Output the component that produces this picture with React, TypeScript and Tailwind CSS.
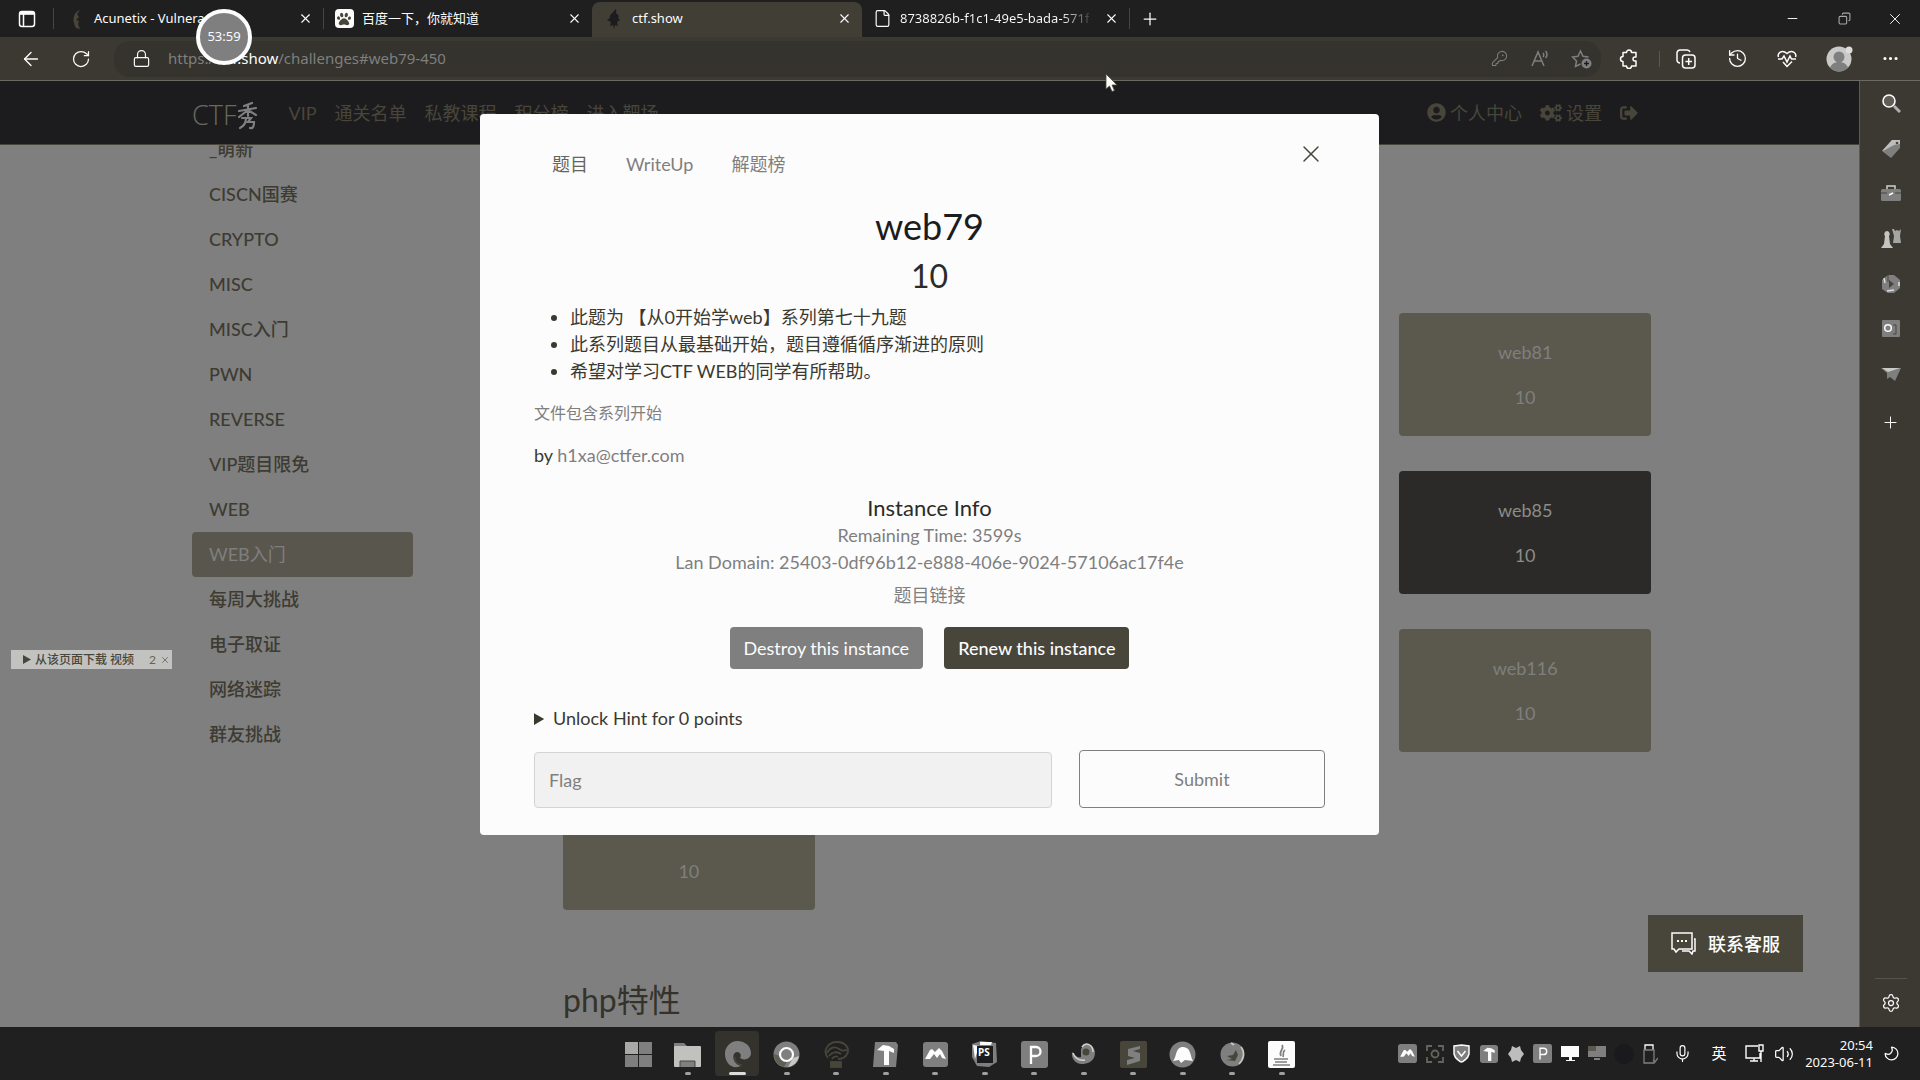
import React from "react";
import type { ReactNode } from "react";
import {
  ArrowLeft,
  RotateCw,
  Lock,
  X,
  Plus,
  Minus,
  Copy,
  KeyRound,
  History,
  Ellipsis,
  File,
  Settings,
  Mic,
  Volume2,
  Moon,
} from "lucide-react";
import { FaUserCircle, FaCogs, FaSignOutAlt, FaPaw } from "react-icons/fa";

const LIGHT = "#fcfcfc";
const MID = "#7f7f7f";
const OLIVE = "#48463a";
const DARK = "#1c1c1e";

/* ---------- Browser tabs ---------- */

function Tab({ icon, title, active, faded, size }: { icon: ReactNode; title: string; active?: boolean; faded?: boolean; size: string }) {
  return (
    <div
      className={
        (active ? "bg-[#403e35] rounded-t-lg mt-0.5 pb-0.5 " : "") + "flex items-center pr-2 min-w-0 shrink " + size
      }
    >
      <button type="button" className="flex min-w-0 flex-1 items-center gap-2 text-left">
        <span className="flex size-5 shrink-0 items-center justify-center">{icon}</span>
        <span
          className={
            (faded ? "bg-gradient-to-r from-[#fcfcfc] from-85% to-[#48463a] bg-clip-text text-transparent " : "text-[#fcfcfc] ") +
            "whitespace-nowrap"
          }
        >
          {title}
        </span>
      </button>
      <button type="button" aria-label={"Close " + title} className="flex w-5 shrink-0 items-center justify-center text-[#fcfcfc]">
        <X size={15} strokeWidth={1.75} />
      </button>
    </div>
  );
}

function Flame({ color }: { color: string }) {
  return (
    <svg width="14" height="20" viewBox="0 0 14 20" fill={color}>
      <path d="M9 0c1 2-1 3 1 5 2 1 2 3 1 4l2 2-3 2 1 4-3-1-1 4-1-4-3 1 1-4-4-2 3-2c-1-3 2-4 3-6C7 3 7 1 9 0z" />
    </svg>
  );
}

function TabBar() {
  return (
    <header className="flex h-[37px] shrink-0 bg-[#1f1f20]">
      <button type="button" aria-label="Tab actions" className="flex w-[53px] items-center justify-center">
        <svg width="18" height="18" viewBox="0 0 18 18" fill="none" stroke={LIGHT} strokeWidth="1.5">
          <rect x="1.5" y="1.5" width="15" height="15" rx="2.5" />
          <path d="M2 4h14M5.5 4v12" />
          <path d="M2 3h14" strokeWidth="2.5" />
        </svg>
      </button>
      <span className="my-2 w-px bg-[#48463a]" />
      <Tab
        size="w-[269px] pl-3 text-[13px]"
        icon={
          <svg width="10" height="20" viewBox="0 0 10 20" fill={OLIVE}>
            <path d="M9 1c-6 2-9 9-4 18l4 1-2-5 1-3-3-1 3-3-2-3z" />
          </svg>
        }
        title="Acunetix - Vulnera"
      />
      <span className="my-2 w-px bg-[#48463a]" />
      <Tab
        size="w-[268px] pl-2.5 text-[13px]"
        icon={
          <span className="flex size-[19px] items-center justify-center rounded-sm bg-[#fcfcfc] text-[#48463a]">
            <FaPaw size={14} />
          </span>
        }
        title="百度一下，你就知道"
      />
      <Tab size="w-[270px] pl-3 text-[13px]" active icon={<Flame color={DARK} />} title="ctf.show" />
      <Tab size="w-[267px] pl-2.5 text-[13px]" faded icon={<File size={19} strokeWidth={1.5} color={LIGHT} />} title="8738826b-f1c1-49e5-bada-571f" />
      <span className="my-2 w-px bg-[#48463a]" />
      <button type="button" aria-label="New tab" className="flex w-10 items-center justify-center text-[#fcfcfc]">
        <Plus size={20} strokeWidth={1.5} />
      </button>
      <div className="ml-auto flex text-[#fcfcfc]">
        <button type="button" aria-label="Minimize" className="flex w-[52px] items-center justify-center">
          <Minus size={15} strokeWidth={1.5} />
        </button>
        <button type="button" aria-label="Restore" className="flex w-[52px] items-center justify-center text-[#a8a8a4]">
          <Copy size={13} strokeWidth={2} className="-scale-x-100" />
        </button>
        <button type="button" aria-label="Close window" className="flex w-[50px] items-center justify-center">
          <X size={18} strokeWidth={1.25} />
        </button>
      </div>
    </header>
  );
}

/* ---------- Address bar ---------- */

function ToolButton({ label, width, children }: { label: string; width: string; children: ReactNode }) {
  return (
    <button type="button" aria-label={label} className={"flex h-full shrink-0 items-center justify-center text-[#fcfcfc] " + width}>
      {children}
    </button>
  );
}

function Toolbar() {
  return (
    <div className="flex h-11 shrink-0 items-center border-b border-[#6c6b63] bg-[#3b3932] pl-1.5">
      <ToolButton label="Back" width="w-[50px]">
        <ArrowLeft size={22} strokeWidth={1.5} />
      </ToolButton>
      <ToolButton label="Refresh" width="w-[50px]">
        <RotateCw size={20} strokeWidth={1.5} />
      </ToolButton>
      <div className="ml-2 flex h-9 min-w-0 flex-1 items-center rounded-2xl bg-[#34332d] pl-[18px]">
        <span className="flex w-[36px] text-[#fcfcfc]">
          <Lock size={19} strokeWidth={1.5} />
        </span>
        <span className="min-w-0 flex-1 truncate text-[15px] text-[#7f7f7f]">
          https://<span className="text-[#fcfcfc]">ctf.show</span>/challenges#web79-450
        </span>
        <button type="button" aria-label="Passwords" className="flex w-10 justify-center text-[#7f7f7f]">
          <KeyRound size={17} strokeWidth={1.5} />
        </button>
        <button type="button" aria-label="Read aloud" className="flex w-[42px] justify-center">
          <svg width="19" height="18" viewBox="0 0 19 18" fill="none" stroke={MID} strokeWidth="1.5">
            <path d="M1 16L7 2l6 14M3 11h8M12 3c1 1 1 3 0 4M14.500 1c2 2 2 5 0 7" />
          </svg>
        </button>
        <button type="button" aria-label="Add to favorites" className="flex w-10 justify-center">
          <svg width="21" height="20" viewBox="0 0 21 20" fill="none" stroke={MID} strokeWidth="1.5">
            <path d="M9.500 15L4.500 17.500l1-5.500L1.500 8l5.500-.8L9.500 2l2.500 5.200 5.500.8" />
            <circle cx="15.500" cy="14.500" r="5" fill={MID} stroke="none" />
            <path d="M15.500 12v5M13 14.500h5" stroke={DARK} strokeWidth="1.300" />
          </svg>
        </button>
      </div>
      <ToolButton label="Extensions" width="w-[58px] pr-0.5">
        <svg width="20" height="20" viewBox="0 0 20 20" fill="none" stroke={LIGHT} strokeWidth="1.500" strokeLinejoin="round">
          <path d="M4 3.500h3.500a2.500 2.500 0 0 1 5 0H17V8h-1a2 2 0 0 0 0 4h1v5h-4.500a2.500 2.500 0 0 1-5 0H4v-4.500a2.500 2.500 0 0 1 0-5z" />
        </svg>
      </ToolButton>
      <span className="h-4 w-px bg-[#5a5950]" />
      <ToolButton label="Collections" width="w-[52px]">
        <svg width="20" height="20" viewBox="0 0 20 20" fill="none" stroke={LIGHT} strokeWidth="1.5">
          <path d="M4 14a3 3 0 0 1-3-3V4a3 3 0 0 1 3-3h7a3 3 0 0 1 3 2" />
          <rect x="6.500" y="6" width="12.500" height="13" rx="3" />
          <path d="M12.700 9v7M9.500 12.500h6.500" />
        </svg>
      </ToolButton>
      <ToolButton label="History" width="w-[50px]">
        <History size={21} strokeWidth={1.5} />
      </ToolButton>
      <ToolButton label="Browser essentials" width="w-[50px]">
        <svg width="20" height="18" viewBox="0 0 20 18" fill="none" stroke={LIGHT} strokeWidth="1.5">
          <path d="M1.500 7C0 3 5 -1 10 3.500 15-1 20 3 18.500 7M6 12l4 4.500 5-5M1 9h4l2-3 3 6 3-6 1.500 3H19" />
        </svg>
      </ToolButton>
      <ToolButton label="Profile" width="w-[54px]">
        <svg width="27" height="26" viewBox="0 0 27 26">
          <circle cx="13" cy="13" r="12.500" fill="#c9c9c7" />
          <circle cx="23" cy="4" r="3.500" fill="#dcdcda" />
          <circle cx="13" cy="11" r="5.500" fill={MID} />
          <path d="M4 22c2-8 16-8 18 0-5 4.500-13 4.500-18 0z" fill={MID} />
        </svg>
      </ToolButton>
      <ToolButton label="More" width="w-[54px] pr-1.5">
        <Ellipsis size={19} strokeWidth={2} />
      </ToolButton>
    </div>
  );
}

/* ---------- Site ---------- */

const navLinks = ["VIP", "通关名单", "私教课程", "积分榜", "进入靶场"];

function SiteNav() {
  return (
    <nav className="h-16 shrink-0 border-b border-[#48463a] bg-[#1c1c1e] text-[#48463a]">
      <div className="mx-auto flex h-full max-w-[1475px] items-center text-lg">
        <a href="#home" aria-label="CTF秀" className="mr-7 flex items-end pt-1">
          <span className="font-['Open_Sans',sans-serif] text-[27px] font-light leading-8 text-[#6a695f]">CTF</span>
          <svg width="24" height="30" viewBox="0 0 22 30" fill="none" stroke={MID} strokeWidth="2.200" strokeLinecap="round">
            <path d="M15 2L7 5M2 10l17-3M11 4v11M11 9l-9 7M11 9l8 5M5 17h9l-3 4h6c0 4-1 7-4 6M9 17c0 5-2 8-6 10" />
          </svg>
        </a>
        <div className="flex gap-[18px]">
          {navLinks.map((n) => (
            <a key={n} href="#nav" className="whitespace-nowrap">
              {n}
            </a>
          ))}
        </div>
        <div className="ml-auto mr-[29px] flex items-center gap-[18px]">
          <a href="#user" className="flex items-center gap-1">
            <FaUserCircle size={19} />
            个人中心
          </a>
          <a href="#settings" className="flex items-center gap-1">
            <FaCogs size={22} />
            设置
          </a>
          <a href="#logout" aria-label="Logout">
            <FaSignOutAlt size={18} />
          </a>
        </div>
      </div>
    </nav>
  );
}

const categories = [
  "_萌新",
  "CISCN国赛",
  "CRYPTO",
  "MISC",
  "MISC入门",
  "PWN",
  "REVERSE",
  "VIP题目限免",
  "WEB",
  "WEB入门",
  "每周大挑战",
  "电子取证",
  "网络迷踪",
  "群友挑战",
];

function Categories() {
  return (
    <ul className="-mt-[18px] w-[221px] shrink-0">
      {categories.map((c) => (
        <li key={c}>
          <a
            href="#category"
            className={
              (c === "WEB入门" ? "bg-[#59574d] font-normal text-[#7f7f7f] " : "font-medium text-[#3d3b32] ") +
              "block rounded px-[17px] py-2 text-lg leading-[29px]"
            }
          >
            {c}
          </a>
        </li>
      ))}
    </ul>
  );
}

const cards = [
  { name: "web81", place: "col-start-4", tone: "bg-[#5b594d] text-[#7f7f7f]" },
  { name: "web85", place: "col-start-4", tone: "bg-[#2b2a28] text-[#8c8c88]" },
  { name: "web116", place: "col-start-4", tone: "bg-[#5b594d] text-[#7f7f7f]" },
  { name: "web117", place: "col-start-1", tone: "bg-[#5b594d] text-[#7f7f7f]" },
];

function Challenges() {
  return (
    <main className="min-w-0 flex-1 pr-4 pt-[168px]">
      <div className="grid grid-cols-4 gap-x-[27px] gap-y-[35px]">
        {cards.map((c) => (
          <button
            type="button"
            key={c.name}
            className={"flex h-[123px] flex-col items-center justify-center gap-[17px] rounded text-lg leading-7 " + c.place + " " + c.tone}
          >
            <span>{c.name}</span>
            <span>10</span>
          </button>
        ))}
      </div>
      <h3 className="mt-[66px] text-[32px] leading-[48px] text-[#34332b]">php特性</h3>
    </main>
  );
}

/* ---------- Challenge dialog ---------- */

function Dialog() {
  return (
    <div className="absolute inset-x-0 top-[33px] flex justify-center">
      <section
        role="dialog"
        aria-label="web79"
        className="w-full max-w-[899px] rounded bg-[#fcfcfc] px-[54px] pb-[27px] pt-[26px] text-lg leading-[27px] text-[#3a392f]"
      >
        <div className="flex items-start justify-between">
          <div role="tablist" className="flex gap-[38px] pl-[18px] pt-[11px] text-[#7f7f7f]">
            <button type="button" role="tab" className="text-[#66655c]">
              题目
            </button>
            <button type="button" role="tab">
              WriteUp
            </button>
            <button type="button" role="tab">
              解题榜
            </button>
          </div>
          <button type="button" aria-label="Close" className="text-[#48463a]">
            <X size={28} strokeWidth={1.25} />
          </button>
        </div>
        <h2 className="mt-6 text-center text-4xl leading-[48px] text-[#1c1c1e]">web79</h2>
        <h3 className="mt-0.5 text-center text-[32px] leading-[48px] text-[#2c2b26]">10</h3>
        <ul className="mt-1 list-disc pl-9">
          <li>此题为 【从0开始学web】系列第七十九题</li>
          <li>此系列题目从最基础开始，题目遵循循序渐进的原则</li>
          <li>希望对学习CTF WEB的同学有所帮助。</li>
        </ul>
        <p className="mt-4 text-base leading-[24px] text-[#7f7f7f]">文件包含系列开始</p>
        <p className="mt-[17px]">
          by{" "}
          <a href="mailto:h1xa@ctfer.com" className="text-[#7f7f7f]">
            h1xa@ctfer.com
          </a>
        </p>
        <div className="mt-[25px] text-center text-[#7f7f7f]">
          <h5 className="text-[22px] leading-7 text-[#2c2b26]">Instance Info</h5>
          <p>Remaining Time: 3599s</p>
          <p>Lan Domain: 25403-0df96b12-e888-406e-9024-57106ac17f4e</p>
          <a href="#instance" className="mt-[6px] block">
            题目链接
          </a>
          <div className="mt-[18px] flex justify-center gap-[21px] text-[#fcfcfc]">
            <button type="button" className="h-[42px] rounded bg-[#7f7f7f] px-3.5">
              Destroy this instance
            </button>
            <button type="button" className="h-[42px] rounded bg-[#48463a] px-3.5 font-medium">
              Renew this instance
            </button>
          </div>
        </div>
        <details className="mt-9">
          <summary className="cursor-pointer">Unlock Hint for 0 points</summary>
        </details>
        <div className="mt-[18px] flex items-end gap-[27px]">
          <input
            type="text"
            aria-label="Flag"
            placeholder="Flag"
            className="h-14 min-w-0 flex-1 rounded border border-[#d4d4d4] bg-[#f1f1f1] px-3.5 placeholder:text-[#7f7f7f]"
          />
          <button type="button" className="h-[58px] w-[246px] rounded border border-[#7f7f7f] text-[#7f7f7f]">
            Submit
          </button>
        </div>
      </section>
    </div>
  );
}

/* ---------- Floating widgets ---------- */

function DownloadBar() {
  return (
    <div className="absolute left-[11px] top-[569px] flex h-[19px] w-[161px] items-center gap-1 bg-[#c2c2c1] pl-3 pr-0.5 text-xs text-[#48463a]">
      <svg width="8" height="9" viewBox="0 0 8 9" fill={OLIVE}>
        <path d="M0 0l8 4.500L0 9z" />
      </svg>
      <button type="button" className="whitespace-nowrap font-medium">
        从该页面下载 视频
      </button>
      <span className="ml-auto text-[#66655c]">2</span>
      <button type="button" aria-label="Close download bar" className="text-[#66655c]">
        <X size={10} />
      </button>
    </div>
  );
}

function ContactButton() {
  return (
    <button
      type="button"
      className="absolute bottom-[55px] right-14 flex h-[57px] w-[155px] items-center justify-center gap-3 bg-[#48463a] text-lg font-medium text-[#fcfcfc]"
    >
      <svg width="25" height="23" viewBox="0 0 25 23" fill="none" stroke={LIGHT} strokeWidth="1.500">
        <path d="M1 1h20v16H8l-3 3-2-3H1zM23 7h1v12h-2l-1 3-3-3h-7" />
        <path d="M6 9h2M10 9h2M14 9h2" strokeWidth="2" />
      </svg>
      联系客服
    </button>
  );
}

/* ---------- Browser side bar ---------- */

const sideIcons: { name: string; art: ReactNode }[] = [
  {
    name: "Search",
    art: (
      <g>
        <path d="M13 12l6 6" stroke="#b0b0ae" strokeWidth="3" />
        <circle cx="8" cy="7" r="6" fill="#5f5e56" stroke={LIGHT} strokeWidth="1.600" />
      </g>
    ),
  },
  {
    name: "Shopping",
    art: (
      <g>
        <path d="M11 1h8v8l-9 10-9-7z" fill={MID} />
        <path d="M11 1h8v4l-6 1-9 5-3 1z" fill="#bdbdbb" />
        <circle cx="16" cy="4" r="1.300" fill={OLIVE} />
      </g>
    ),
  },
  {
    name: "Tools",
    art: (
      <g>
        <path d="M6 5V2h8v3" fill="none" stroke="#cfcfcd" strokeWidth="1.500" />
        <rect x="0" y="5" width="20" height="12" rx="1.500" fill={MID} />
        <path d="M0 9h6M14 9h6" stroke={OLIVE} />
        <path d="M8 11l4-2" stroke={LIGHT} strokeWidth="1.500" />
      </g>
    ),
  },
  {
    name: "Games",
    art: (
      <g>
        <path d="M11 0h2l1 2 2-1 2 1 2-2-1 7 1 7h-8l1-7z" fill="#a5a5a3" />
        <path d="M6 2a3 3 0 0 1 2 5l1 8 3 4H0l3-4 1-8a3 3 0 0 1 2-5z" fill="#c4c4c2" />
      </g>
    ),
  },
  {
    name: "Microsoft 365",
    art: (
      <g>
        <path d="M7 1h6l6 5v8l-6 5H7l-6-4V6z" fill={MID} />
        <path d="M8 6l5 4-5 4z" fill={OLIVE} />
        <path d="M7 1v7" stroke={OLIVE} />
        <path d="M3 4l1 5M6 17l7-1M18 8v4" stroke="#dededc" strokeWidth="1.500" />
      </g>
    ),
  },
  {
    name: "Outlook",
    art: (
      <g>
        <rect x="1" y="1" width="18" height="17" rx="1" fill={MID} />
        <circle cx="7" cy="9" r="3.300" fill="none" stroke={LIGHT} strokeWidth="1.500" />
        <path d="M12 6h3v9h-3" fill="none" stroke={OLIVE} />
      </g>
    ),
  },
  {
    name: "Drop",
    art: (
      <g>
        <path d="M0 4h20l-6 13-5-4-3 2V9z" fill={MID} />
        <path d="M1 4h18L7 8z" fill="#c9c9c7" />
      </g>
    ),
  },
];

function SideBar() {
  return (
    <aside className="flex w-[61px] shrink-0 flex-col items-center border-l border-[#5c5b52] bg-[#3b3932] pl-px text-[#fcfcfc]">
      {sideIcons.map((s) => (
        <button type="button" key={s.name} aria-label={s.name} className="flex h-[45px] w-full items-center justify-center">
          <svg width="20" height="20" viewBox="0 0 20 20">
            {s.art}
          </svg>
        </button>
      ))}
      <button type="button" aria-label="Customize sidebar" className="mt-1 flex h-[45px] w-full items-center justify-center">
        <Plus size={19} strokeWidth={1.25} />
      </button>
      <span className="mt-auto h-px w-8 bg-[#55534a]" />
      <button type="button" aria-label="Sidebar settings" className="flex h-12 w-full items-center justify-center">
        <Settings size={20} strokeWidth={1.5} />
      </button>
    </aside>
  );
}

/* ---------- Taskbar ---------- */

const MountainMark = () => <path d="M3 18l5-9 2-1 3 3 4-4 3 3 4 8-4-1-2-4-3 4-3-4-4 5z" fill={LIGHT} />;
const HammerMark = () => <path d="M5 9l6-5 6 1 5 3v4l-5-2v14h-5V10z" fill={LIGHT} />;

const apps: { name: string; art: ReactNode }[] = [
  {
    name: "Start",
    art: (
      <g fill={MID}>
        <rect x="0" y="1" width="13" height="12" fill="#a9a9a7" />
        <rect x="14" y="1" width="13" height="12" />
        <rect x="0" y="14" width="13" height="12" />
        <rect x="14" y="14" width="13" height="12" />
      </g>
    ),
  },
  {
    name: "Explorer",
    art: (
      <g>
        <path d="M0 2h10l3 3v5H0z" fill={MID} />
        <rect x="0" y="5" width="27" height="21" rx="1" fill="#c1c1c0" />
        <path d="M6 26v-6h15v6" fill={MID} stroke={OLIVE} />
      </g>
    ),
  },
  {
    name: "Edge",
    art: (
      <g>
        <path d="M1 13A13 12.500 0 0 1 27 12c0 6-7 8-11 5 2-3 0-6-3-6-5 0-6 11 4 14C8 29 1 22 1 13z" fill={MID} />
        <path d="M11 16c-1 4 2 8 7 8" stroke={OLIVE} fill="none" strokeWidth="1.500" />
      </g>
    ),
  },
  {
    name: "Chrome",
    art: (
      <g>
        <circle cx="13.500" cy="13.500" r="13" fill={MID} />
        <path d="M1 13a13 13 0 0 0 10 13l4-7-8-4z" fill="#5f5e54" />
        <path d="M26 15a13 13 0 0 1-11 11l5-9z" fill="#c8c8c6" />
        <circle cx="13.500" cy="13.500" r="6.500" fill={MID} stroke={LIGHT} strokeWidth="2.200" />
      </g>
    ),
  },
  {
    name: "Navicat",
    art: (
      <g fill="none" stroke={OLIVE} strokeWidth="1.800">
        <path d="M5 17C-1 10 5 1 14 1s13 7 10 12c-2 4-6 5-9 5M4 12c3-6 8-7 12-4s5 1 8 1M6 15c3-4 8-5 12-2M9 18c2-3 4-3 6-2" />
        <rect x="8" y="21" width="10" height="5" fill={OLIVE} />
      </g>
    ),
  },
  {
    name: "Hammer",
    art: (
      <g>
        <path d="M3 1h21l2 3-2 22H1z" fill={MID} />
        <HammerMark />
      </g>
    ),
  },
  {
    name: "Mountain",
    art: (
      <g>
        <rect x="1" y="1" width="25" height="25" rx="3" fill={MID} />
        <MountainMark />
      </g>
    ),
  },
  {
    name: "PhpStorm",
    art: (
      <g>
        <path d="M1 3l9-3 15 2 1 19-8 5-12-1-5-9z" fill={MID} />
        <path d="M2 4l2 14 4-13zM9 1h12l-1 3H9z" fill={LIGHT} />
        <rect x="6" y="5" width="16" height="17" fill={DARK} />
        <text x="7" y="15" fontSize="10" fontWeight="700" fill={LIGHT}>PS</text>
      </g>
    ),
  },
  {
    name: "P",
    art: (
      <g>
        <rect x="0" y="0" width="27" height="27" rx="3" fill={MID} />
        <path d="M10 23V6h5c6 0 6 9 0 9h-5" fill="none" stroke={LIGHT} strokeWidth="2.300" />
      </g>
    ),
  },
  {
    name: "Cloud",
    art: (
      <g>
        <path d="M11 9c2-9 14-6 14 3 0 9-9 11-13 11C5 23 1 17 2 11c3 4 6 6 9 5z" fill={MID} />
        <circle cx="16" cy="11" r="3.500" fill={OLIVE} />
        <path d="M12 6c4-6 11-2 11 5M3 12c2 5 6 8 12 7" stroke="#d2d2d0" fill="none" strokeWidth="1.500" />
      </g>
    ),
  },
  {
    name: "Sublime",
    art: (
      <g>
        <rect x="0" y="0" width="27" height="27" rx="2" fill={OLIVE} />
        <path d="M20 5L8 8v7l7 2-8 2v5l13-4v-8l-7-2 7-2z" fill={MID} />
      </g>
    ),
  },
  {
    name: "Bell",
    art: (
      <g>
        <circle cx="13.500" cy="13.500" r="13" fill={MID} />
        <path d="M4 20c4-4 2-14 10-14s7 9 10 14l-8-1-4 3-2-3z" fill={LIGHT} />
      </g>
    ),
  },
  {
    name: "Firefox",
    art: (
      <g>
        <circle cx="13.500" cy="13.500" r="12" fill={MID} />
        <path d="M17 9l2 5-3 6-9-1 6-1-5-3 6-1z" fill={OLIVE} />
        <path d="M22 6c4 5 3 12-2 17M12 2l3 2" stroke="#c9c9c7" fill="none" strokeWidth="1.600" />
      </g>
    ),
  },
  {
    name: "Java",
    art: (
      <g>
        <rect x="0" y="0" width="27" height="27" rx="2" fill={LIGHT} />
        <path d="M14 4c3 4-4 6-1 11M17 9c-3 2-1 4-2 7M6 18h14M7 21h12M5 24h17" stroke={MID} fill="none" strokeWidth="1.700" />
      </g>
    ),
  },
];

function TrayIcon({ label, children }: { label: string; children: ReactNode }) {
  return (
    <button type="button" aria-label={label} className="flex w-[27px] items-center justify-center">
      {children}
    </button>
  );
}

function Tray() {
  return (
    <div className="absolute inset-y-0 right-0 flex items-center pr-[19px] text-[#fcfcfc]">
      <TrayIcon label="Mountain">
        <svg width="19" height="19" viewBox="0 0 27 27">
          <rect width="27" height="27" rx="4" fill={MID} />
          <MountainMark />
        </svg>
      </TrayIcon>
      <TrayIcon label="Scan">
        <svg width="18" height="18" viewBox="0 0 18 18" fill="none" stroke="#66655c" strokeWidth="1.800">
          <path d="M1 6V1h5M12 1h5v5M17 12v5h-5M6 17H1v-5" />
          <circle cx="9" cy="9" r="3.500" />
        </svg>
      </TrayIcon>
      <TrayIcon label="Security">
        <svg width="17" height="19" viewBox="0 0 17 19" fill={MID} stroke={LIGHT} strokeWidth="1.500">
          <path d="M1 2l7.500-1L16 2v8c-1 5-7 8-7.500 8S2 15 1 10z" />
          <path d="M4.500 7l4 5 4-5" fill="none" />
        </svg>
      </TrayIcon>
      <TrayIcon label="Hammer">
        <svg width="18" height="18" viewBox="0 0 27 27">
          <rect width="27" height="27" rx="4" fill={MID} />
          <HammerMark />
        </svg>
      </TrayIcon>
      <TrayIcon label="Flower">
        <svg width="18" height="18" viewBox="0 0 18 18" fill="#bdbdbb">
          <path d="M5 1l4 2 4-2 1 4 3 4-3 4-1 4-4-2-4 2-1-4-3-4 3-4z" />
        </svg>
      </TrayIcon>
      <TrayIcon label="P">
        <svg width="19" height="19" viewBox="0 0 27 27">
          <rect width="27" height="27" rx="3" fill={MID} />
          <path d="M10 22V6h5c6 0 6 9 0 9h-5" fill="none" stroke={LIGHT} strokeWidth="2" />
        </svg>
      </TrayIcon>
      <TrayIcon label="Screen">
        <svg width="18" height="17" viewBox="0 0 18 17" fill={LIGHT}>
          <path d="M0 1h18v11H0zM8 12h3v3h3v1H5v-1h3z" />
        </svg>
      </TrayIcon>
      <TrayIcon label="Display">
        <svg width="18" height="17" viewBox="0 0 18 17" fill={MID}>
          <path d="M0 1h18v11H0zM6 13h6v2H6z" />
          <path d="M0 1h8v5H0z" fill="#5b594d" />
        </svg>
      </TrayIcon>
      <TrayIcon label="Hidden app">
        <span className="size-5 shrink-0 rounded-full bg-[#1a1a1c]" />
      </TrayIcon>
      <TrayIcon label="USB">
        <svg width="15" height="20" viewBox="0 0 15 20" fill="none" stroke={MID} strokeWidth="1.300">
          <path d="M2 6V1h8v5" stroke={LIGHT} />
          <path d="M1 6h10v13H1zM10 16l2 2 3-4" />
        </svg>
      </TrayIcon>
      <button type="button" aria-label="Microphone" className="flex w-9 items-center justify-center">
        <Mic size={19} strokeWidth={1.5} />
      </button>
      <button type="button" className="flex w-[38px] items-center justify-center text-[15px]">
        英
      </button>
      <button type="button" aria-label="Network" className="flex w-8 items-center justify-center">
        <svg width="19" height="19" viewBox="0 0 19 19" fill="none" stroke={LIGHT} strokeWidth="1.400">
          <path d="M13 2H1v12h14V9M5 17h8M9 14v3M14 1h4v6h-4zM16 7v11" />
        </svg>
      </button>
      <TrayIcon label="Volume">
        <Volume2 size={20} strokeWidth={1.5} />
      </TrayIcon>
      <div className="w-[76px] text-right text-[13px] leading-[17px]">
        <div>20:54</div>
        <div className="whitespace-nowrap">2023-06-11</div>
      </div>
      <button type="button" aria-label="Notifications" className="ml-2 flex w-5 items-center justify-center">
        <Moon size={17} strokeWidth={1.75} className="-scale-x-100" />
      </button>
    </div>
  );
}

function Taskbar() {
  return (
    <footer className="relative flex h-[53px] shrink-0 justify-center bg-[#202020]">
      <div className="flex w-[688px] justify-between py-1">
        {apps.map((a) => (
          <button
            type="button"
            key={a.name}
            aria-label={a.name}
            className={(a.name === "Edge" ? "bg-[#33322c] " : "") + "flex w-11 flex-col items-center rounded"}
          >
            <svg width="27" height="27" viewBox="0 0 27 27" className="mt-2.5">
              {a.art}
            </svg>
            <span
              className={
                (a.name === "Edge" ? "w-[17px] bg-[#dcdcdc]" : a.name === "Start" ? "w-0" : "w-1.5 bg-[#a0a09d]") + " mt-1 h-[3px] rounded-full"
              }
            />
          </button>
        ))}
      </div>
      <Tray />
    </footer>
  );
}

/* ---------- Screen ---------- */

export default function App() {
  return (
    <div className="relative flex h-screen flex-col overflow-hidden bg-[#7f7f7f] font-['Noto_Sans','Noto_Sans_CJK_SC',sans-serif]">
      <TabBar />
      <Toolbar />
      <div className="flex min-h-0 flex-1">
        <div className="relative flex min-w-0 flex-1 flex-col overflow-hidden font-['Lato','Noto_Sans_CJK_SC',sans-serif]">
          <SiteNav />
          <div className="min-h-0 flex-1 overflow-hidden px-4">
            <div className="mx-auto flex max-w-[1475px] gap-[150px]">
              <Categories />
              <Challenges />
            </div>
          </div>
          <DownloadBar />
          <ContactButton />
          <Dialog />
        </div>
        <SideBar />
      </div>
      <Taskbar />
      <div className="absolute left-[196px] top-[9px] flex size-14 items-center justify-center rounded-full border-4 border-[#fcfcfc] bg-[#7f7f7f] text-[13px] text-[#fcfcfc]">
        53:59
      </div>
      <svg className="absolute left-[1105px] top-[73px]" width="13" height="20" viewBox="0 0 13 20" fill={LIGHT} stroke={OLIVE} strokeWidth="0.800">
        <path d="M1 1v15l3.500-3L7 18.500l2.500-1L7 12h5z" />
      </svg>
    </div>
  );
}
